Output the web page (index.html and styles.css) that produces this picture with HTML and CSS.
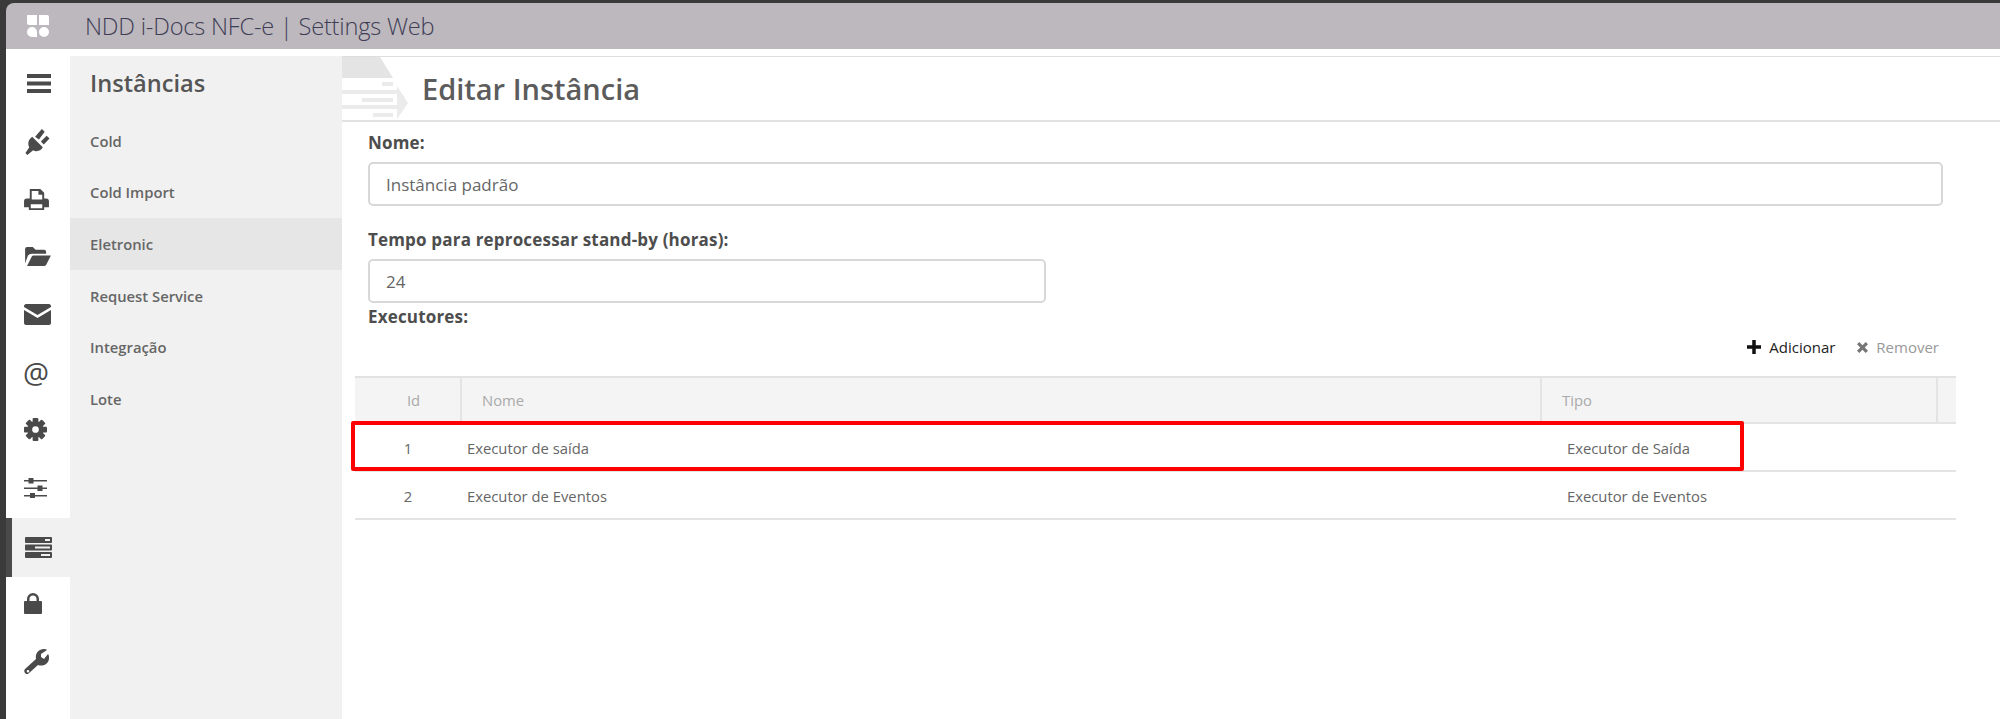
FILE: index.html
```html
<!DOCTYPE html>
<html lang="pt">
<head>
<meta charset="utf-8">
<title>NDD i-Docs NFC-e | Settings Web</title>
<link rel="stylesheet" href="styles.css">
</head>
<body>
<div class="window">
  <header class="titlebar">
    <svg class="logo" viewBox="0 0 24 24"><path d="M1 1h10v10H3a2 2 0 0 1-2-2zM13 1h8a2 2 0 0 1 2 2v8H13zM6 13a5 5 0 0 1 5 5v5H6a5 5 0 0 1 0-10zM18 13a5 5 0 0 1 0 10 5 5 0 0 1 0-10z"/></svg>
    <span class="apptitle">NDD i-Docs NFC-e | Settings Web</span>
  </header>
  <div class="app">
    <nav class="rail">
      <div class="railitem"><svg class="i-menu" viewBox="0 0 24 19"><path d="M0 0h24v4H0zM0 7.500h24v4H0zM0 15h24v4H0z"/></svg></div>
      <div class="railitem"><svg class="i-plug" viewBox="0 0 26 28"><path d="M8 9l11 11c-2 4-7 5-10 3l-6 5-2-2 4-6C3 16 4 12 8 9zM11 9l7-8 3 3-6 8zM17 14l6-6 3 3-6 6z"/></svg></div>
      <div class="railitem"><svg class="i-print" viewBox="0 0 26 24"><path fill-rule="evenodd" d="M6 1h11l4 4v6h2c2 0 3 1 3 3v6h-5v3H5v-3H0v-6c0-2 1-3 3-3h3zM8 3v9h11V7h-4V3zM7 17v4h12v-4z"/></svg></div>
      <div class="railitem"><svg class="i-folder" viewBox="0 0 29 22"><path d="M1 18V3c0-1 1-2 2-2h6l3 3h9c1 0 2 1 2 2v2H8c-2 0-3 1-4 2zM3 21l5-10c1-1 1-1 3-1h17l-5 10c-1 1-1 1-3 1z"/></svg></div>
      <div class="railitem"><svg class="i-mail" viewBox="0 0 27 21"><path d="M2 0h23c1 0 2 1 2 2v1L13.500 11 0 3V2c0-1 1-2 2-2zM0 6l13.500 8L27 6v13c0 1-1 2-2 2H2c-1 0-2-1-2-2z"/></svg></div>
      <div class="railitem railat">@</div>
      <div class="railitem"><svg class="i-cog" viewBox="0 0 24 24"><g class="cogteeth"><rect x="9" y="0" width="6" height="24" rx="1"/><rect x="9" y="0" width="6" height="24" rx="1" transform="rotate(45 12 12)"/><rect x="9" y="0" width="6" height="24" rx="1" transform="rotate(90 12 12)"/><rect x="9" y="0" width="6" height="24" rx="1" transform="rotate(135 12 12)"/><circle cx="12" cy="12" r="8.500"/></g><circle class="coghole" cx="12" cy="12" r="3.500"/></svg></div>
      <div class="railitem"><svg class="i-sliders" viewBox="0 0 23 20"><path d="M0 2h23v1.400H0zM0 9.500h23v1.400H0zM0 17h23v1.400H0zM4.500 0h5v5.500h-5zM13.500 7.500h5V13h-5zM6 15h5v5.500H6z"/></svg></div>
      <div class="railitem active"><svg class="i-server" viewBox="0 0 27 21"><path fill-rule="evenodd" d="M1 0h25c.500 0 1 .500 1 1v4c0 .500-.500 1-1 1H1c-.500 0-1-.500-1-1V1c0-.500.500-1 1-1zM20 2v2h5V2zM1 7.500h25c.500 0 1 .500 1 1v4c0 .500-.500 1-1 1H1c-.500 0-1-.500-1-1v-4c0-.500.500-1 1-1zM10 9.500v2h15v-2zM1 15h25c.500 0 1 .500 1 1v4c0 .500-.500 1-1 1H1c-.500 0-1-.500-1-1v-4c0-.500.500-1 1-1zM16 17v2h9v-2z"/></svg></div>
      <div class="railitem lockrow"><svg class="i-lock" viewBox="0 0 18 22"><path fill-rule="evenodd" d="M3 9V7a6 6 0 0 1 12 0v2h2c.500 0 1 .500 1 1v11c0 .500-.500 1-1 1H1c-.500 0-1-.500-1-1V10c0-.500.500-1 1-1zM5.500 9h7V7a3.500 3.500 0 0 0-7 0z"/></svg></div>
      <div class="railitem wrenchrow"><svg class="i-wrench" viewBox="0 0 25 25"><path fill-rule="evenodd" d="M1 20L12 10C11 5 14 0 20 0c1 0 2 0 3 1l-6 4v3l3 2 4-5c1 1 1 3 1 4 0 6-6 9-11 7L4 25c-1 1-2 0-3-1s-1-3 0-4zM4 21a1.300 1.300 0 1 0 0 2.600A1.300 1.300 0 0 0 4 21z"/></svg></div>
    </nav>
    <aside class="panel">
      <h2 class="paneltitle">Instâncias</h2>
      <ul class="panellist">
        <li class="panelitem">Cold</li>
        <li class="panelitem">Cold Import</li>
        <li class="panelitem current">Eletronic</li>
        <li class="panelitem">Request Service</li>
        <li class="panelitem">Integração</li>
        <li class="panelitem">Lote</li>
      </ul>
    </aside>
    <main class="main">
      <div class="pagehead">
        <svg class="headart" viewBox="0 0 66 63"><path class="a1" d="M0 0h38l13 21H0z"/><path class="a2" d="M40 25h11v4H40zM0 33h55v4H0zM20 41h31v4H20zM0 48h55v4H0zM31 56h20v4H31zM55 29l11 17-11 16z"/></svg>
        <h1 class="pagetitle">Editar Instância</h1>
      </div>
      <form class="form">
        <label class="label">Nome:</label>
        <div class="input full">Instância padrão</div>
        <label class="label second">Tempo para reprocessar stand-by (horas):</label>
        <div class="input short">24</div>
        <label class="label third">Executores:</label>
      </form>
      <div class="tablewrap">
        <div class="toolbar">
          <span class="tool add"><svg viewBox="0 0 12 12"><path d="M4.500 0h3v4.500H12v3H7.500V12h-3V7.500H0v-3h4.500z"/></svg>Adicionar</span>
          <span class="tool remove"><svg viewBox="0 0 12 12"><path d="M2.500 0L6 3.500 9.500 0 12 2.500 8.500 6 12 9.500 9.500 12 6 8.500 2.500 12 0 9.500 3.500 6 0 2.500z"/></svg>Remover</span>
        </div>
        <div class="grid">
          <div class="row headrow">
            <div class="cell cid">Id</div>
            <div class="cell cname">Nome</div>
            <div class="cell ctype">Tipo</div>
            <div class="cell cend"></div>
          </div>
          <div class="row">
            <div class="cell cid">1</div>
            <div class="cell cname">Executor de saída</div>
            <div class="cell ctype">Executor de Saída</div>
            <div class="cell cend"></div>
          </div>
          <div class="row">
            <div class="cell cid">2</div>
            <div class="cell cname">Executor de Eventos</div>
            <div class="cell ctype">Executor de Eventos</div>
            <div class="cell cend"></div>
          </div>
          <div class="highlight"></div>
        </div>
      </div>
    </main>
  </div>
</div>
</body>
</html>
```
FILE: styles.css
```css
* { box-sizing: border-box; }
html, body { margin: 0; height: 100%; }
body {
  background: #3a3a3a;
  font-family: "Open Sans", "Noto Sans", sans-serif;
  color: #555;
  overflow: hidden;
}
.window {
  height: 719px;
  margin-left: 6px;
  padding-top: 3px;
  display: flex;
  flex-direction: column;
}
.titlebar {
  height: 46px;
  background: #bcb8be;
  border-top-left-radius: 8px;
  display: flex;
  align-items: center;
  flex: none;
}
.logo { width: 24px; height: 24px; margin-left: 20px; fill: #fff; }
.apptitle {
  margin-left: 35px;
  font-weight: 300;
  font-size: 23.600px;
  letter-spacing: -0.2px;
  color: #3f3d55;
}
.app {
  flex: 1;
  display: flex;
  background: #fff;
  padding-top: 7px;
  min-height: 0;
}
.rail { width: 64px; flex: none; margin-top: -1px; }
.railitem {
  height: 57.700px;
  display: flex;
  align-items: center;
  padding-left: 18px;
}
.railitem svg { fill: #4a4a4a; flex: none; }
.i-menu { width: 24px; height: 19px; margin-left: 3px; }
.i-plug { width: 26px; height: 27px; }
.i-print { width: 25px; height: 23px; }
.i-folder { width: 28px; height: 21px; }
.i-mail { width: 27px; height: 21px; }
.i-cog { width: 23px; height: 23px; }
.coghole { fill: #fff; }
.i-sliders { width: 23px; height: 20px; }
.i-server { width: 27px; height: 21px; }
.i-lock { width: 18px; height: 22px; }
.i-wrench { width: 25px; height: 25px; }
.railat { font-size: 29px; line-height: 1; color: #4a4a4a; padding-left: 17px; }
.railitem.active {
  background: #f1f1f1;
  border-left: 6px solid #4a4a4a;
  padding-left: 13px;
  margin-top: 1.400px;
  height: 59px;
}
.railitem.lockrow { height: 52px; }
.railitem.wrenchrow { height: 66px; }
.panel { width: 272px; flex: none; background: #f1f1f1; }
.paneltitle {
  margin: 0;
  height: 59px;
  padding: 10px 0 0 20px;
  font-size: 23.600px;
  line-height: 34px;
  font-weight: 600;
  color: #555;
}
.panellist { list-style: none; margin: 0; padding: 0; }
.panelitem {
  height: 51.600px;
  padding-left: 20px;
  display: flex;
  align-items: center;
  font-size: 14.800px;
  font-weight: 600;
  color: #666;
}
.panelitem.current { background: #e6e6e6; }
.main { flex: 1; min-width: 0; }
.pagehead {
  height: 66px;
  border-top: 1px solid #dedede;
  border-bottom: 2px solid #e2e2e2;
  display: flex;
  align-items: center;
}
.headart { width: 66px; height: 63px; flex: none; }
.a1 { fill: #e4e4e4; }
.a2 { fill: #ebebeb; }
.pagetitle {
  margin: 0 0 0 14px;
  font-size: 29px;
  font-weight: 600;
  color: #5c5c5c;
}
.form { padding: 11px 0 0 26px; display: flex; flex-direction: column; }
.label { font-size: 17px; font-weight: 700; line-height: 20px; color: #4d4d4d; letter-spacing: 0.18px; }
.second { margin-top: 24px; }
.third { margin-top: 4px; }
.input {
  margin-top: 9px;
  height: 44px;
  border: 2px solid #d8d8d8;
  border-radius: 5px;
  padding-left: 16px;
  display: flex;
  align-items: center;
  font-size: 17px;
  color: #666;
}
.full { width: 1575px; }
.short { width: 678px; }
.tablewrap { width: 1601px; margin-left: 13px; }
.toolbar {
  height: 49px;
  display: flex;
  justify-content: flex-end;
  align-items: center;
  gap: 22px;
  padding-right: 17px;
  padding-bottom: 9px;
  font-size: 15px;
}
.tool { display: inline-flex; align-items: center; gap: 8px; }
.add { color: #222; }
.add svg { width: 14px; height: 14px; fill: #111; }
.remove { color: #999; }
.remove svg { width: 11px; height: 11px; fill: #777; }
.grid { position: relative; font-size: 14.800px; color: #666; }
.row {
  display: grid;
  grid-template-columns: 107px 1080px 396px 18px;
  height: 48px;
  padding-top: 2px;
  border-bottom: 2px solid #e4e4e4;
}
.row .cid { padding-right: 1px; }
.headrow {
  height: 48px;
  padding-top: 0;
  background: #f4f4f4;
  border-top: 2px solid #e2e2e2;
  color: #aaa;
}
.cell { display: flex; align-items: center; }
.cid { justify-content: center; }
.cname { padding-left: 5px; }
.ctype { padding-left: 25px; }
.headrow .cell { border-right: 2px solid #e4e4e4; }
.headrow .cend { border-right: 0; }
.headrow .cid { padding-left: 12px; padding-right: 0; }
.headrow .cname { padding-left: 20px; }
.headrow .ctype { padding-left: 20px; }
.highlight {
  position: absolute;
  left: -4px;
  top: 45px;
  width: 1393px;
  height: 50px;
  border: 4px solid #f00;
  border-radius: 2px;
}
```
